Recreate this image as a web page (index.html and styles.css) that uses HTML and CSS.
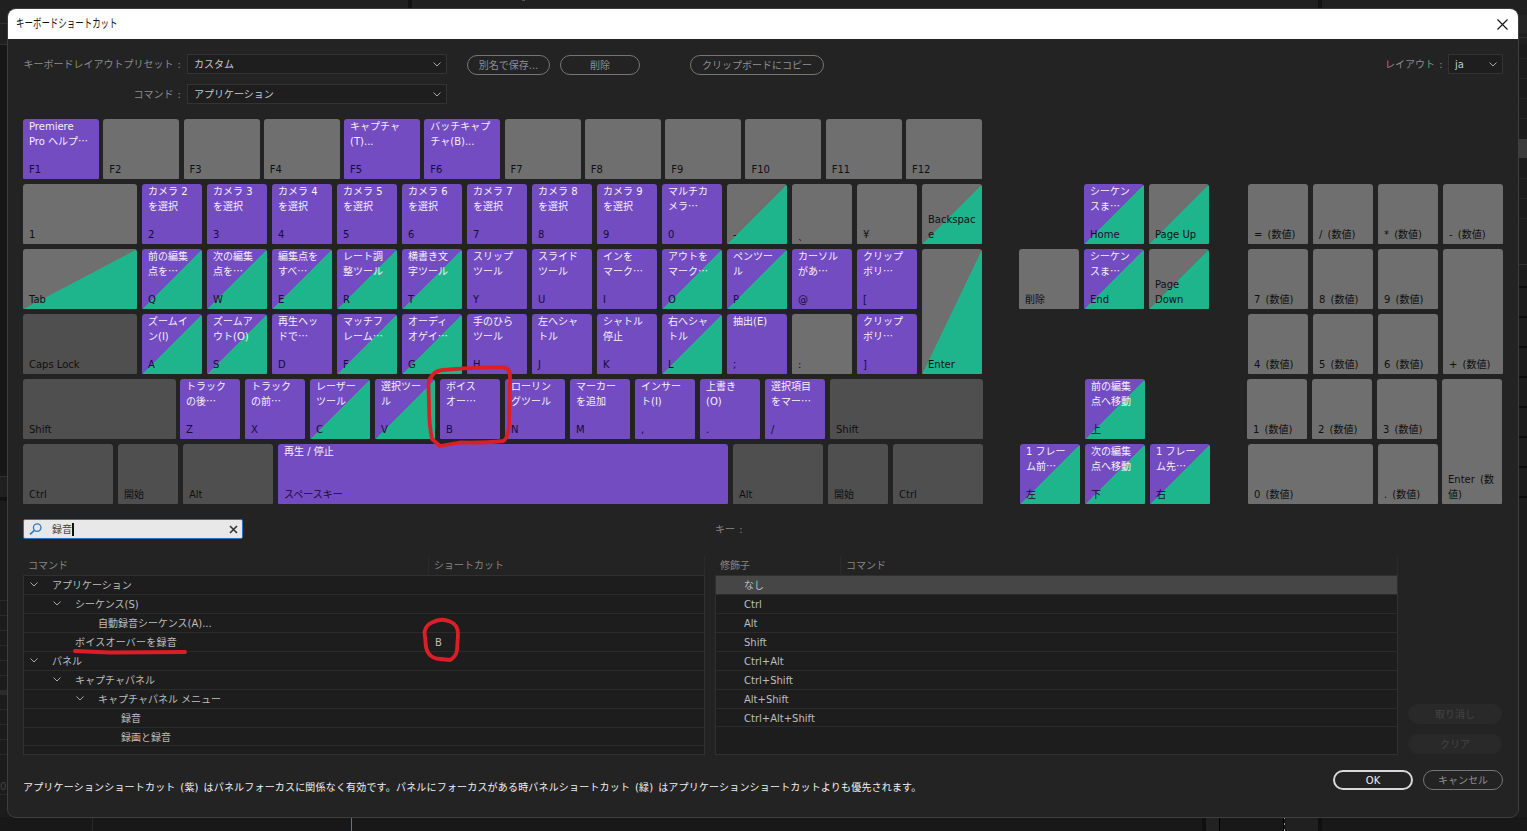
FILE: index.html
```
<!DOCTYPE html>
<html lang="ja">
<head>
<meta charset="utf-8">
<title>キーボードショートカット</title>
<link rel="stylesheet" href="styles.css">
</head>
<body>
<svg class="backdrop" width="1527" height="831" shape-rendering="crispEdges">
  <rect width="1527" height="831" fill="#1c1c1c"/>
  <rect width="1527" height="44" fill="#202020"/>
  <rect x="408" width="4" height="9" fill="#121212"/><rect x="1318" width="4" height="9" fill="#121212"/>
  <rect x="522" width="3" height="1" fill="#555"/>
  <path d="M0 23.5H8M0 44.5H8M0 476.5H8" stroke="#303030"/>
  <rect y="45" width="8" height="431" fill="#171717"/>
  <rect y="477" width="8" height="20" fill="#202020"/><rect y="497" width="8" height="4" fill="#121212"/>
  <path d="M0 600.5H8M0 615.5H8M0 630.5H8M0 645.5H8M0 660.5H8M0 675.5H8M0 709.5H8M0 724.5H8M0 739.5H8M0 754.5H8M0 794.5H8" stroke="#292929"/>
  <rect y="690" width="8" height="5" fill="#2b2b2b"/>
  <rect x="1518" y="15" width="9" height="18" fill="#252525"/>
  <path d="M1518 37.5h9M1518 264.5h9" stroke="#303030"/>
  <path d="M1518 58.5h9M1518 78.5h9M1518 98.5h9M1518 118.5h9M1518 178.5h9M1518 198.5h9M1518 218.5h9" stroke="#262626"/>
  <rect x="1518" y="139" width="9" height="19" fill="#3c3c3c"/>
  <path d="M1518 286.5h9M1518 316.5h9M1518 346.5h9M1518 376.5h9M1518 406.5h9M1518 436.5h9M1518 466.5h9M1518 496.5h9" stroke="#0d0d0d" stroke-width="2"/>
  <rect y="817" width="1527" height="14" fill="#181818"/>
  <path d="M92.5 817v14" stroke="#292929"/><rect x="351" y="817" width="1" height="14" fill="#4479b8"/>
  <rect x="1202" y="817" width="4" height="14" fill="#101010"/><rect x="1206" y="817" width="13" height="14" fill="#222"/>
  <path d="M1219.5 817v14M1283.5 817v14" stroke="#000"/>
  <path d="M1284.5 817v14" stroke="#999" stroke-dasharray="2 4"/>
  <rect x="1286" y="817" width="32" height="14" fill="#202020"/><rect x="1318" y="817" width="4" height="14" fill="#101010"/>
</svg>
<span class="ghost">0</span>

<main class="dialog">
  <header class="titlebar">
    <span class="title">キーボードショートカット</span>
    <svg width="11" height="11" viewBox="0 0 11 11"><path d="M.5.5l10 10M10.500.5l-10 10" stroke="#111" stroke-width="1.1"/></svg>
  </header>

  <div class="content">
  <section class="presets">
    <label>キーボードレイアウトプリセット :</label>
    <div class="select">カスタム<svg class="chev" viewBox="0 0 8 5"><path d="M.5.5L4 4 7.500.5"/></svg></div>
    <div class="actions"><span class="btn w83">別名で保存...</span><span class="btn w80">削除</span><span class="btn w134">クリップボードにコピー</span></div>
    <label class="layout-label">レイアウト :</label>
    <div class="select">ja<svg class="chev" viewBox="0 0 8 5"><path d="M.5.5L4 4 7.500.5"/></svg></div>
    <label>コマンド :</label>
    <div class="select">アプリケーション<svg class="chev" viewBox="0 0 8 5"><path d="M.5.5L4 4 7.500.5"/></svg></div>
  </section>

  <section class="keyboard">
    <div class="main-keys">
      <div class="row frow">
        <div class="key p"><b>Premiere<br>Pro ヘルプ<u>…</u></b><i>F1</i></div>
        <div class="key"><i>F2</i></div><div class="key"><i>F3</i></div><div class="key"><i>F4</i></div>
        <div class="key p"><b>キャプチャ<br>(T)...</b><i>F5</i></div>
        <div class="key p"><b>バッチキャプ<br>チャ(B)...</b><i>F6</i></div>
        <div class="key"><i>F7</i></div><div class="key"><i>F8</i></div><div class="key"><i>F9</i></div>
        <div class="key"><i>F10</i></div><div class="key"><i>F11</i></div><div class="key"><i>F12</i></div>
      </div>
      <div class="row">
        <div class="key w114"><i>1</i></div>
        <div class="key p"><b>カメラ 2<br>を選択</b><i>2</i></div>
        <div class="key p"><b>カメラ 3<br>を選択</b><i>3</i></div>
        <div class="key p"><b>カメラ 4<br>を選択</b><i>4</i></div>
        <div class="key p"><b>カメラ 5<br>を選択</b><i>5</i></div>
        <div class="key p"><b>カメラ 6<br>を選択</b><i>6</i></div>
        <div class="key p"><b>カメラ 7<br>を選択</b><i>7</i></div>
        <div class="key p"><b>カメラ 8<br>を選択</b><i>8</i></div>
        <div class="key p"><b>カメラ 9<br>を選択</b><i>9</i></div>
        <div class="key p"><b>マルチカ<br>メラ<u>…</u></b><i>0</i></div>
        <div class="key g"><i>-</i></div>
        <div class="key"><i>ˎ</i></div>
        <div class="key"><i>¥</i></div>
        <div class="key g"><i>Backspac<br>e</i></div>
      </div>
      <div class="with-enter">
        <div class="row">
          <div class="key g w114"><i>Tab</i></div>
          <div class="key p g"><b>前の編集<br>点を<u>…</u></b><i>Q</i></div>
          <div class="key p g"><b>次の編集<br>点を<u>…</u></b><i>W</i></div>
          <div class="key p g"><b>編集点を<br>すべ<u>…</u></b><i>E</i></div>
          <div class="key p g"><b>レート調<br>整ツール</b><i>R</i></div>
          <div class="key p g"><b>横書き文<br>字ツール</b><i>T</i></div>
          <div class="key p"><b>スリップ<br>ツール</b><i>Y</i></div>
          <div class="key p"><b>スライド<br>ツール</b><i>U</i></div>
          <div class="key p"><b>インを<br>マーク<u>…</u></b><i>I</i></div>
          <div class="key p g"><b>アウトを<br>マーク<u>…</u></b><i>O</i></div>
          <div class="key p g"><b>ペンツー<br>ル</b><i>P</i></div>
          <div class="key p"><b>カーソル<br>があ<u>…</u></b><i>@</i></div>
          <div class="key p"><b>クリップ<br>ボリ<u>…</u></b><i>[</i></div>
        </div>
        <div class="key g enter"><i>Enter</i></div>
        <div class="row">
          <div class="key d w114"><i>Caps Lock</i></div>
          <div class="key p g"><b>ズームイ<br>ン(I)</b><i>A</i></div>
          <div class="key p g"><b>ズームア<br>ウト(O)</b><i>S</i></div>
          <div class="key p"><b>再生ヘッ<br>ドで<u>…</u></b><i>D</i></div>
          <div class="key p g"><b>マッチフ<br>レーム<u>…</u></b><i>F</i></div>
          <div class="key p g"><b>オーディ<br>オゲイ<u>…</u></b><i>G</i></div>
          <div class="key p"><b>手のひら<br>ツール</b><i>H</i></div>
          <div class="key p"><b>左へシャ<br>トル</b><i>J</i></div>
          <div class="key p"><b>シャトル<br>停止</b><i>K</i></div>
          <div class="key p g"><b>右へシャ<br>トル</b><i>L</i></div>
          <div class="key p"><b>抽出(E)</b><i>;</i></div>
          <div class="key"><i>:</i></div>
          <div class="key p"><b>クリップ<br>ボリ<u>…</u></b><i>]</i></div>
        </div>
      </div>
      <div class="row shift-row">
        <div class="key d w153"><i>Shift</i></div>
        <div class="key p"><b>トラック<br>の後<u>…</u></b><i>Z</i></div>
        <div class="key p"><b>トラック<br>の前<u>…</u></b><i>X</i></div>
        <div class="key p g"><b>レーザー<br>ツール</b><i>C</i></div>
        <div class="key p g"><b>選択ツー<br>ル</b><i>V</i></div>
        <div class="key p"><b>ボイス<br>オー<u>…</u></b><i>B</i></div>
        <div class="key p"><b>ローリン<br>グツール</b><i>N</i></div>
        <div class="key p"><b>マーカー<br>を追加</b><i>M</i></div>
        <div class="key p"><b>インサー<br>ト(I)</b><i>,</i></div>
        <div class="key p"><b>上書き<br>(O)</b><i>.</i></div>
        <div class="key p"><b>選択項目<br>をマー<u>…</u></b><i>/</i></div>
        <div class="key d w153"><i>Shift</i></div>
      </div>
      <div class="row">
        <div class="key d w90"><i>Ctrl</i></div>
        <div class="key d"><i>開始</i></div>
        <div class="key d w90"><i>Alt</i></div>
        <div class="key p w450"><b>再生 / 停止</b><i>スペースキー</i></div>
        <div class="key d w90"><i>Alt</i></div>
        <div class="key d"><i>開始</i></div>
        <div class="key d w90"><i>Ctrl</i></div>
      </div>
    </div>

    <div class="nav-keys">
      <div class="row end">
        <div class="key p g"><b>シーケン<br>スま<u>…</u></b><i>Home</i></div>
        <div class="key g"><i>Page Up</i></div>
      </div>
      <div class="row">
        <div class="key"><i>削除</i></div>
        <div class="key p g"><b>シーケン<br>スま<u>…</u></b><i>End</i></div>
        <div class="key g"><i>Page<br>Down</i></div>
      </div>
      <div class="arrows">
        <div class="key p g"><b>前の編集<br>点へ移動</b><i>上</i></div>
        <div class="row">
          <div class="key p g"><b>1 フレー<br>ム前<u>…</u></b><i>左</i></div>
          <div class="key p g"><b>次の編集<br>点へ移動</b><i>下</i></div>
          <div class="key p g"><b>1 フレー<br>ム先<u>…</u></b><i>右</i></div>
        </div>
      </div>
    </div>

    <div class="num-keys">
      <div class="pad">
        <div class="key"><i>= (数値)</i></div><div class="key"><i>/ (数値)</i></div><div class="key"><i>* (数値)</i></div><div class="key"><i>- (数値)</i></div>
        <div class="key"><i>7 (数値)</i></div><div class="key"><i>8 (数値)</i></div><div class="key"><i>9 (数値)</i></div><div class="key tall"><i>+ (数値)</i></div>
        <div class="key"><i>4 (数値)</i></div><div class="key"><i>5 (数値)</i></div><div class="key"><i>6 (数値)</i></div>
      </div>
      <div class="pad low">
        <div class="key"><i>1 (数値)</i></div><div class="key"><i>2 (数値)</i></div><div class="key"><i>3 (数値)</i></div><div class="key tall"><i>Enter (数<br>値)</i></div>
        <div class="row zero"><div class="key w125"><i>0 (数値)</i></div><div class="key"><i>. (数値)</i></div></div>
      </div>
    </div>
  </section>

  <section class="lists">
    <div class="search">
      <svg width="14" height="12" viewBox="0 0 14 12" fill="none" stroke="#2f7bc4"><circle cx="8.200" cy="4.600" r="3.800" stroke-width="1.300"/><path d="M5.300 7.400L1 11.400" stroke-width="1.700"/></svg>
      <span>録音</span><em></em>
      <svg class="clear" width="9" height="9" viewBox="0 0 9 9"><path d="M1 1l7 7M8 1L1 8" stroke="#333" stroke-width="1.600"/></svg>
    </div>
    <div class="key-label">キー :</div>

    <div class="table cmds">
      <div class="head"><span>コマンド</span><span>ショートカット</span></div>
      <div class="body">
        <div class="tr"><svg class="chev" viewBox="0 0 8 5"><path d="M.5.5L4 4 7.500.5"/></svg><span>アプリケーション</span></div>
        <div class="tr l1"><svg class="chev" viewBox="0 0 8 5"><path d="M.5.5L4 4 7.500.5"/></svg><span>シーケンス(S)</span></div>
        <div class="tr l3"><span>自動録音シーケンス(A)...</span></div>
        <div class="tr l2"><span class="name">ボイスオーバーを録音</span><span>B</span></div>
        <div class="tr"><svg class="chev" viewBox="0 0 8 5"><path d="M.5.5L4 4 7.500.5"/></svg><span>パネル</span></div>
        <div class="tr l1"><svg class="chev" viewBox="0 0 8 5"><path d="M.5.5L4 4 7.500.5"/></svg><span>キャプチャパネル</span></div>
        <div class="tr l2c"><svg class="chev" viewBox="0 0 8 5"><path d="M.5.5L4 4 7.500.5"/></svg><span>キャプチャパネル メニュー</span></div>
        <div class="tr l4"><span>録音</span></div>
        <div class="tr l4 last"><span>録画と録音</span></div>
      </div>
    </div>

    <div class="table mods">
      <div class="head"><span>修飾子</span><span>コマンド</span></div>
      <div class="body">
        <div class="tr sel">なし</div><div class="tr">Ctrl</div><div class="tr">Alt</div><div class="tr">Shift</div>
        <div class="tr">Ctrl+Alt</div><div class="tr">Ctrl+Shift</div><div class="tr">Alt+Shift</div><div class="tr last">Ctrl+Alt+Shift</div>
      </div>
    </div>

    <div class="side"><span class="btn off">取り消し</span><span class="btn off">クリア</span></div>
  </section>

  <footer>
    <p>アプリケーションショートカット (紫) はパネルフォーカスに関係なく有効です。パネルにフォーカスがある時パネルショートカット (緑) はアプリケーションショートカットよりも優先されます。</p>
    <span class="btn w80 ok">OK</span><span class="btn w80">キャンセル</span>
  </footer>
  </div>
</main>

<svg class="marks" width="1527" height="831" fill="none" stroke="#dc1f26" stroke-linecap="round" stroke-linejoin="round">
  <path d="M431 378Q433 371 443 370Q475 367 503 367.500Q510 368 510 376L509 425Q508 439 503 441Q485 443 460 442.500L440 446L432 439Q429 425 429 405L428.500 387Q428 379 432 376" stroke-width="3.800"/>
  <path d="M432 622.500Q441 617.500 450 621.500Q458.500 625 458 634L457 650Q456 657 450 660L436 658.500Q426 656 425.500 642L424.500 632Q426 625 432 622.500Z" stroke-width="3.800"/>
  <path d="M75 651L110 652.500L185 652" stroke-width="3.800"/>
</svg>
</body>
</html>
```

FILE: styles.css
```
* { box-sizing: border-box; }
body {
  margin: 0;
  width: 1527px;
  height: 831px;
  overflow: hidden;
  background: #1c1c1c;
  font: 10px/15px "DejaVu Sans", "Noto Sans CJK JP", sans-serif;
  color: #bdbdbd;
  white-space: nowrap;
}
.backdrop, .marks { position: absolute; left: 0; top: 0; }
.ghost { position: absolute; left: 0; top: 779px; color: #444; }

.dialog {
  position: absolute;
  left: 7px;
  top: 8px;
  width: 1512px;
  height: 810px;
  border: 1px solid #3e3e3e;
  border-radius: 9px;
  background: #232323;
  overflow: hidden;
}
.titlebar {
  height: 30px;
  padding: 0 10px 0 8px;
  display: flex;
  align-items: center;
  justify-content: space-between;
  background: #fff;
}
.title {
  color: #111;
  font-size: 12px;
  font-family: "Liberation Sans", "Noto Sans CJK JP", sans-serif;
  transform: scaleX(.705);
  transform-origin: left;
}
.content { padding: 15px 15px 0; }

/* Preset selectors */
.presets {
  display: grid;
  grid-template-columns: 158px 260px 1fr 57px 55px;
  grid-template-rows: 20px 20px;
  gap: 10px 6px;
  align-items: center;
  color: #8b8b8b;
}
.presets label { text-align: right; word-spacing: 1px; }
.presets .layout-label { margin-right: 1px; }
.select {
  height: 20px;
  padding: 0 5px 0 6px;
  border: 1px solid #333;
  background: #1e1e1e;
  color: #c8c8c8;
  display: flex;
  align-items: center;
  justify-content: space-between;
}
.chev { width: 8px; height: 5px; fill: none; stroke: #a8a8a8; flex: none; }
.actions { display: flex; gap: 10px; padding: 2px 0 0 14px; }
.actions .w134 { margin-left: 40px; }
.btn {
  height: 20px;
  border: 1px solid #757575;
  border-radius: 10px;
  color: #8f8f8f;
  line-height: 20px;
  text-align: center;
}
.w80 { width: 80px; }
.w83 { width: 83px; }
.w134 { width: 134px; }

/* Keyboard */
.keyboard { display: flex; margin-top: 15px; height: 385px; }
.row { display: flex; gap: 5px; }
.frow { justify-content: space-between; gap: 0; }
.frow .key { width: 76px; }
.main-keys { width: 959px; display: flex; flex-direction: column; gap: 5px; }
.key {
  width: 60px;
  height: 60px;
  flex: none;
  padding: 0 0 2px 6px;
  border-radius: 3px 3px 1px 1px;
  background: var(--base);
  --base: #6f6f6f;
  display: flex;
  flex-direction: column;
  justify-content: space-between;
}
.key b { font-weight: 400; color: #f6f0ff; }
.key i { font-style: normal; color: #101010; margin-top: auto; }
.key u { text-decoration: none; font-family: "Noto Sans CJK JP", sans-serif; line-height: 0; }
.key.p { --base: #724cc0; }
.key.p i { color: #190b3a; }
.key.d { --base: #4f4f4f; }
.key.g { background: linear-gradient(to bottom right, var(--base) 50%, #1fb58c 50.5%); }
.key.w90 { width: 90px; }
.key.w114 { width: 114px; }
.key.w125 { width: 125px; }
.key.w153 { width: 153px; }
.key.w450 { width: 450px; }
.with-enter {
  display: grid;
  grid-template-columns: 894px 60px;
  gap: 5px;
}
.enter { grid-row: 1 / 3; grid-column: 2; height: 125px; }
.shift-row > :first-child { margin-right: -1px; }
.nav-keys { margin: 65px 0 0 37px; width: 190px; display: flex; flex-direction: column; gap: 5px; }
.row.end { padding-left: 65px; }
.arrows { margin: 65px 0 0 1px; display: flex; flex-direction: column; gap: 5px; }
.arrows > .key { margin-left: 65px; }
.num-keys { margin: 65px 0 0 39px; word-spacing: 2px; }
.pad { display: grid; grid-template-columns: repeat(4, 60px); gap: 5px; }
.pad.low { margin: 5px 0 0 -1px; }
.tall { height: 125px; grid-row: span 2; }
.zero { grid-column: 1 / 4; padding-left: 1px; }

/* Search and lists */
.lists {
  display: grid;
  grid-template-columns: 682px 683px 94px;
  grid-template-rows: 20px 200px;
  gap: 17px 10px;
  margin-top: 15px;
}
.search {
  width: 220px;
  height: 20px;
  padding: 0 4px 0 5px;
  border: 1px solid #2373bd;
  border-radius: 2px;
  background: #e8e8e8;
  color: #444;
  display: flex;
  align-items: center;
}
.search span { margin-left: 9px; padding-top: 1px; }
.search em { width: 2px; height: 13px; background: #111; }
.search .clear { margin-left: auto; }
.key-label { grid-column: 2 / 4; color: #858585; line-height: 21px; word-spacing: 1px; }
.table { height: 199px; }
.head { display: flex; height: 20px; margin-top: -1px; color: #858585; }
.head span { line-height: 21px; padding-left: 5px; border-right: 1px solid #2a2a2a; }
.cmds .head span:first-child { width: 406px; }
.mods .head span:first-child { width: 126px; }
.head span:last-child { flex: 1; }
.body { height: 180px; border: 1px solid #303030; background: #1d1d1d; }
.tr {
  height: 19px;
  padding-top: 1px;
  border-bottom: 1px solid #2b2b2b;
  display: flex;
  align-items: center;
}
.tr.last { height: 18px; }
.cmds .tr { padding-left: 6px; }
.cmds .tr .chev { margin: 0 14px 2px 0; }
.cmds .l1 { padding-left: 29px; }
.cmds .l2 { padding-left: 51px; letter-spacing: .25px; }
.cmds .l2c { padding-left: 52px; }
.cmds .l3 { padding-left: 74px; }
.cmds .l4 { padding-left: 97px; }
.cmds .name { width: 360px; }
.mods .tr { padding-left: 28px; }
.mods .sel { background: #464646; }
.side { display: flex; flex-direction: column; justify-content: flex-end; gap: 10px; height: 198px; }
.btn.off { border-color: #292929; background: #292929; color: #444; }

footer { display: flex; gap: 10px; align-items: center; margin-top: 11px; height: 26px; }
footer p { margin: 14px auto 0 0; color: #f0f0f0; letter-spacing: .18px; word-spacing: 1.5px; }
footer .ok { border: 2px solid #d8d8d8; line-height: 17px; color: #eee; }
```
